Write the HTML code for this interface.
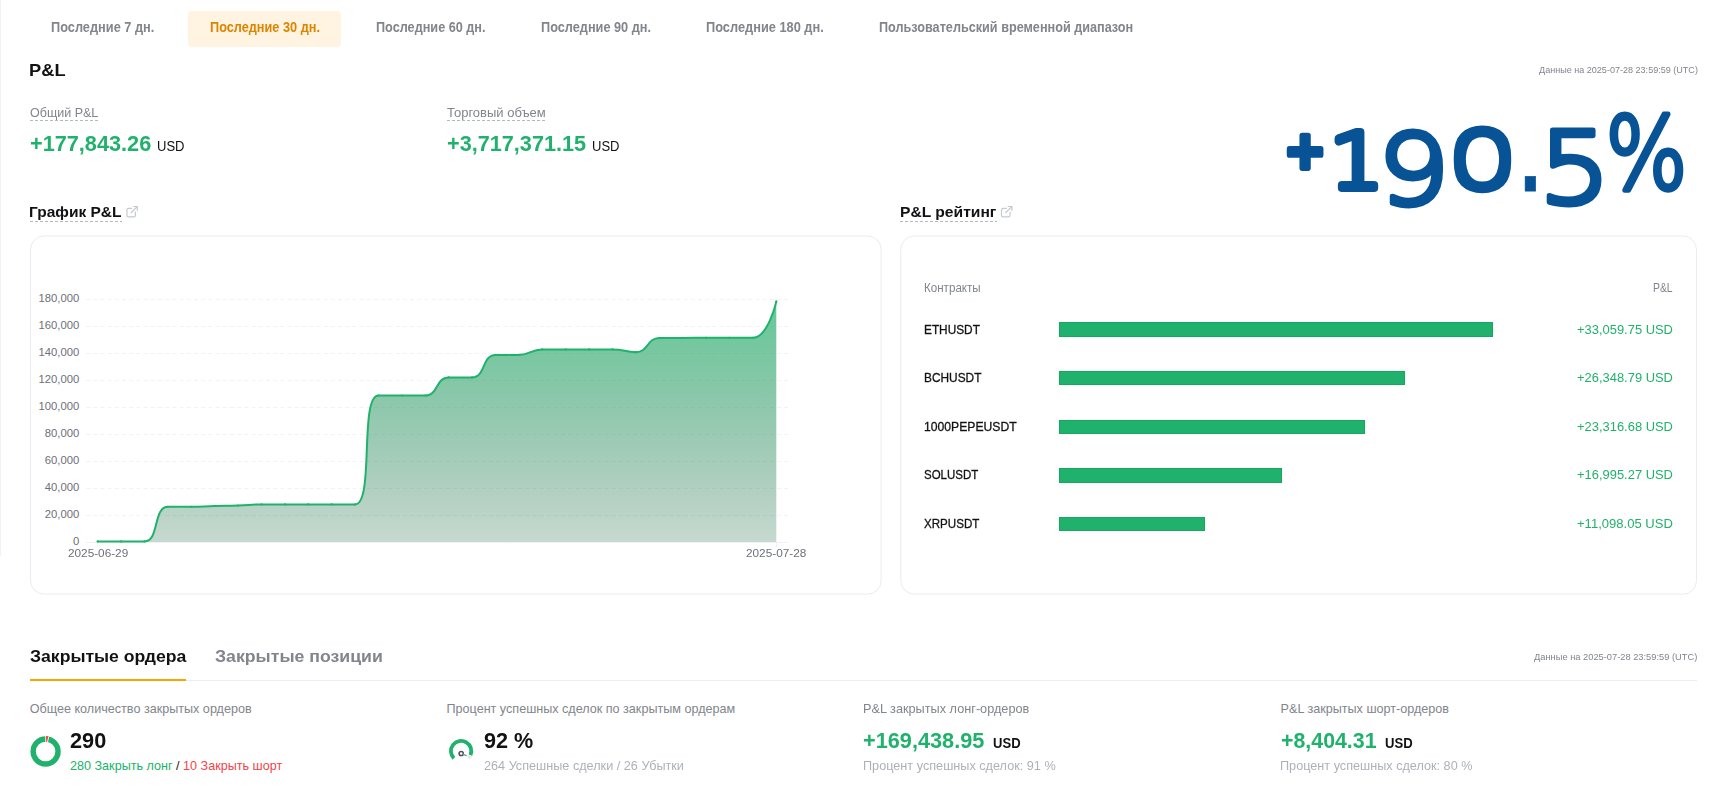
<!DOCTYPE html>
<html lang="ru"><head><meta charset="utf-8"><title>P&amp;L</title>
<style>
html,body{margin:0;padding:0;background:#fff;}
body{width:1724px;height:812px;position:relative;overflow:hidden;font-family:"Liberation Sans",Arial,sans-serif;}
.t{position:absolute;white-space:nowrap;line-height:1;transform-origin:0 0;}
.abs{position:absolute;}
.dash{position:absolute;height:1px;background:repeating-linear-gradient(90deg,#b4b8bf 0,#b4b8bf 3px,transparent 3px,transparent 5px);}
.bar{position:absolute;left:1059px;box-sizing:border-box;border:1px solid #12a960;background:#20b26c;}
svg{position:absolute;left:0;top:0;overflow:visible;}
</style></head><body>
<div class="abs" style="left:0;top:0;width:1px;height:556px;background:#f0f2f5"></div>
<div class="abs" style="left:188px;top:11px;width:153px;height:36px;border-radius:4px;background:#fff3e2"></div>
<div class="dash" style="left:30px;top:120px;width:68px"></div>
<div class="dash" style="left:447px;top:120px;width:99px"></div>
<div class="dash" style="left:30px;top:221px;width:92px"></div>
<div class="dash" style="left:900px;top:221px;width:97px"></div>
<div class="abs" style="left:30px;top:680px;width:1667px;height:1px;background:#ededed"></div>
<div class="abs" style="left:30px;top:679px;width:156px;height:2px;background:#f7a600"></div>
<div class="bar" style="top:322px;width:434px;height:15px"></div><div class="bar" style="top:371px;width:346px;height:14px"></div><div class="bar" style="top:420px;width:306px;height:14px"></div><div class="bar" style="top:468px;width:223px;height:15px"></div><div class="bar" style="top:517px;width:146px;height:14px"></div>
<svg width="1724" height="812" viewBox="0 0 1724 812">
<defs><linearGradient id="ag" x1="0" y1="0" x2="0" y2="1"><stop offset="0" stop-color="#20b26c" stop-opacity="0.695"/><stop offset="1" stop-color="#1d6743" stop-opacity="0.25"/></linearGradient></defs>
<rect x="30.5" y="236" width="850.6" height="358.1" rx="13.5" fill="none" stroke="#e9ecf1"/>
<rect x="900.8" y="236" width="795.7" height="358.1" rx="13.5" fill="none" stroke="#e9ecf1"/>
<g stroke="#f1f2f5" stroke-width="1" stroke-dasharray="4 3.2" fill="none"><line x1="86" x2="788" y1="515.5" y2="515.5"/><line x1="86" x2="788" y1="488.5" y2="488.5"/><line x1="86" x2="788" y1="461.5" y2="461.5"/><line x1="86" x2="788" y1="434.5" y2="434.5"/><line x1="86" x2="788" y1="407.5" y2="407.5"/><line x1="86" x2="788" y1="380.5" y2="380.5"/><line x1="86" x2="788" y1="353.5" y2="353.5"/><line x1="86" x2="788" y1="326.5" y2="326.5"/><line x1="86" x2="788" y1="299.5" y2="299.5"/></g>
<line x1="86" x2="788" y1="542.5" y2="542.5" stroke="#eef0f3" stroke-width="1"/>
<line x1="97.5" x2="97.5" y1="542" y2="547" stroke="#eef0f3" stroke-width="1"/><line x1="776.5" x2="776.5" y1="542" y2="547" stroke="#eef0f3" stroke-width="1"/>
<g font-family="'Liberation Sans', Arial, sans-serif" font-size="11.3" fill="#6e7079" text-anchor="end"><text x="79.3" y="544.6">0</text><text x="79.3" y="517.6">20,000</text><text x="79.3" y="490.6">40,000</text><text x="79.3" y="463.6">60,000</text><text x="79.3" y="436.6">80,000</text><text x="79.3" y="409.6">100,000</text><text x="79.3" y="382.6">120,000</text><text x="79.3" y="355.6">140,000</text><text x="79.3" y="328.6">160,000</text><text x="79.3" y="301.6">180,000</text></g>
<path d="M97.70,541.40C97.70,541.40 109.40,541.40 121.10,541.40C132.80,541.40 136.10,541.40 144.50,541.40C159.50,541.40 152.90,506.80 167.90,506.80C176.30,506.80 179.60,506.80 191.30,506.80C203.00,506.80 203.00,506.23 214.70,505.90C226.40,505.58 226.41,505.87 238.10,505.50C249.81,505.12 249.79,504.40 261.50,504.40C273.19,504.40 273.20,504.40 284.90,504.40C296.60,504.40 296.60,504.40 308.30,504.40C320.00,504.40 320.00,504.40 331.70,504.40C343.40,504.40 351.04,504.40 355.10,504.40C374.44,504.40 359.16,395.50 378.50,395.50C382.56,395.50 390.20,395.50 401.90,395.50C413.60,395.50 414.97,395.50 425.30,395.50C438.37,395.50 435.63,377.40 448.70,377.40C459.03,377.40 462.30,377.40 472.10,377.40C485.70,377.40 481.90,354.90 495.50,354.90C505.30,354.90 507.36,354.90 518.90,354.90C530.76,354.90 530.44,349.40 542.30,349.40C553.84,349.40 554.00,349.40 565.70,349.40C577.40,349.40 577.40,349.40 589.10,349.40C600.80,349.40 600.84,349.40 612.50,349.40C624.24,349.40 625.07,352.20 635.90,352.20C648.47,352.20 646.68,338.12 659.30,338.00C670.08,337.90 671.00,337.95 682.70,337.90C694.40,337.85 694.40,337.80 706.10,337.80C717.80,337.80 717.80,337.80 729.50,337.80C741.20,337.80 744.67,337.80 752.90,337.80C768.07,337.80 776.30,301.60 776.30,301.60L776.30,541.9L97.70,541.9Z" fill="url(#ag)" stroke="none"/>
<path d="M97.70,541.40C97.70,541.40 109.40,541.40 121.10,541.40C132.80,541.40 136.10,541.40 144.50,541.40C159.50,541.40 152.90,506.80 167.90,506.80C176.30,506.80 179.60,506.80 191.30,506.80C203.00,506.80 203.00,506.23 214.70,505.90C226.40,505.58 226.41,505.87 238.10,505.50C249.81,505.12 249.79,504.40 261.50,504.40C273.19,504.40 273.20,504.40 284.90,504.40C296.60,504.40 296.60,504.40 308.30,504.40C320.00,504.40 320.00,504.40 331.70,504.40C343.40,504.40 351.04,504.40 355.10,504.40C374.44,504.40 359.16,395.50 378.50,395.50C382.56,395.50 390.20,395.50 401.90,395.50C413.60,395.50 414.97,395.50 425.30,395.50C438.37,395.50 435.63,377.40 448.70,377.40C459.03,377.40 462.30,377.40 472.10,377.40C485.70,377.40 481.90,354.90 495.50,354.90C505.30,354.90 507.36,354.90 518.90,354.90C530.76,354.90 530.44,349.40 542.30,349.40C553.84,349.40 554.00,349.40 565.70,349.40C577.40,349.40 577.40,349.40 589.10,349.40C600.80,349.40 600.84,349.40 612.50,349.40C624.24,349.40 625.07,352.20 635.90,352.20C648.47,352.20 646.68,338.12 659.30,338.00C670.08,337.90 671.00,337.95 682.70,337.90C694.40,337.85 694.40,337.80 706.10,337.80C717.80,337.80 717.80,337.80 729.50,337.80C741.20,337.80 744.67,337.80 752.90,337.80C768.07,337.80 776.30,301.60 776.30,301.60" fill="none" stroke="#20b26c" stroke-width="2" stroke-linejoin="round" stroke-linecap="round"/>
<g fill="#20b26c"><circle cx="97.70" cy="541.40" r="1.1"/><circle cx="121.10" cy="541.40" r="1.1"/><circle cx="144.50" cy="541.40" r="1.1"/><circle cx="167.90" cy="506.80" r="1.1"/><circle cx="191.30" cy="506.80" r="1.1"/><circle cx="214.70" cy="505.90" r="1.1"/><circle cx="238.10" cy="505.50" r="1.1"/><circle cx="261.50" cy="504.40" r="1.1"/><circle cx="284.90" cy="504.40" r="1.1"/><circle cx="308.30" cy="504.40" r="1.1"/><circle cx="331.70" cy="504.40" r="1.1"/><circle cx="355.10" cy="504.40" r="1.1"/><circle cx="378.50" cy="395.50" r="1.1"/><circle cx="401.90" cy="395.50" r="1.1"/><circle cx="425.30" cy="395.50" r="1.1"/><circle cx="448.70" cy="377.40" r="1.1"/><circle cx="472.10" cy="377.40" r="1.1"/><circle cx="495.50" cy="354.90" r="1.1"/><circle cx="518.90" cy="354.90" r="1.1"/><circle cx="542.30" cy="349.40" r="1.1"/><circle cx="565.70" cy="349.40" r="1.1"/><circle cx="589.10" cy="349.40" r="1.1"/><circle cx="612.50" cy="349.40" r="1.1"/><circle cx="635.90" cy="352.20" r="1.1"/><circle cx="659.30" cy="338.00" r="1.1"/><circle cx="682.70" cy="337.90" r="1.1"/><circle cx="706.10" cy="337.80" r="1.1"/><circle cx="729.50" cy="337.80" r="1.1"/><circle cx="752.90" cy="337.80" r="1.1"/><circle cx="776.30" cy="301.60" r="1.1"/></g>
<!-- link icons -->
<g id="ico" transform="translate(-0.8 0)" fill="none" stroke="#c5c9d1" stroke-width="1.2" stroke-linecap="round" stroke-linejoin="round">
<path d="M132.5,208.3H129.3a1.6,1.6 0 0 0 -1.6,1.6V215.2a1.6,1.6 0 0 0 1.6,1.6H134.6a1.6,1.6 0 0 0 1.6,-1.6V212"/>
<path d="M132,212.5L138,206.6M134.3,206.5H138.1V210.3"/>
</g>
<use href="#ico" x="874.6"/>
<!-- donut -->
<circle cx="45.6" cy="751.5" r="12.45" fill="none" stroke="#20b26c" stroke-width="5.4"/>
<path d="M45.3,735.8 L49.3,736.2 L47.9,742.4 L45.3,742.1 Z" fill="#fff"/>
<path d="M46.0,735.9 L48.5,736.2 L47.1,741.9 L46.2,741.9 Z" fill="#ef454a"/>
<!-- gauge -->
<path d="M453.89,758.31 A10.2,10.2 0 1 1 470.46,755.15" fill="none" stroke="#20b26c" stroke-width="3.8"/>
<path d="M470.46,755.15 A10.2,10.2 0 0 1 468.31,758.31" fill="none" stroke="#e6e8ee" stroke-width="3.8"/>
<circle cx="461.2" cy="753.5" r="2.1" fill="#fff" stroke="#4e5259" stroke-width="1.5"/>
<path d="M463.3,754.4L466.3,755.6" stroke="#8a8e96" stroke-width="1.2" stroke-linecap="round"/>
<defs><filter id="bf2" color-interpolation-filters="sRGB" filterUnits="userSpaceOnUse" x="1379" y="121" width="70" height="93"><feMorphology operator="dilate" radius="0 1"/></filter><filter id="bf3" color-interpolation-filters="sRGB" filterUnits="userSpaceOnUse" x="1448" y="119" width="69" height="80"><feMorphology operator="dilate" radius="0 2"/></filter><filter id="bf5" color-interpolation-filters="sRGB" filterUnits="userSpaceOnUse" x="1541" y="121" width="67" height="92"><feMorphology operator="dilate" radius="0 1"/></filter></defs><g id="big" role="img" aria-label="+190.5%"><text transform="matrix(0.4982 0 0 0.5189 1284.18 168.22)" font-family="'DejaVu Sans', sans-serif" font-size="100" font-weight="700" fill="#085396" stroke="#085396" stroke-width="11.08" stroke-linejoin="round" stroke-linecap="round">+</text><text transform="matrix(0.8546 0 0 0.7740 1329.51 187.70)" font-family="'DejaVu Sans', sans-serif" font-size="100" font-weight="200" fill="#085396" stroke="#085396" stroke-width="10.08" stroke-linejoin="round" stroke-linecap="round">1</text><g filter="url(#bf2)"><text transform="matrix(1.1454 0 0 0.9710 1377.14 203.58)" font-family="'DejaVu Sans', sans-serif" font-size="100" font-weight="200" fill="#085396" stroke="#085396" stroke-width="5.05" stroke-linejoin="round" stroke-linecap="round">9</text></g><g filter="url(#bf3)"><text transform="matrix(1.1217 0 0 0.7812 1446.92 187.65)" font-family="'DejaVu Sans', sans-serif" font-size="100" font-weight="200" fill="#085396" stroke="#085396" stroke-width="5.80" stroke-linejoin="round" stroke-linecap="round">0</text></g><text transform="matrix(0.5990 0 0 0.7701 1518.97 191.01)" font-family="'DejaVu Sans', sans-serif" font-size="100" font-weight="700" fill="#085396" stroke="#085396" stroke-width="1.0" stroke-linejoin="round">.</text><g filter="url(#bf5)"><text transform="matrix(1.1491 0 0 0.9858 1538.26 202.84)" font-family="'DejaVu Sans', sans-serif" font-size="100" font-weight="200" fill="#085396" stroke="#085396" stroke-width="5.02" stroke-linejoin="round" stroke-linecap="round">5</text></g><text transform="matrix(0.8631 0 0 1.0033 1605.39 189.14)" font-family="'DejaVu Sans', sans-serif" font-size="100" font-weight="200" fill="#085396" stroke="#085396" stroke-width="5.30" stroke-linejoin="round" stroke-linecap="round">%</text></g>
</svg>
<span class="t" style="left:50.69px;top:20px;font-size:14px;font-weight:700;color:#81858c;transform:scaleX(0.9124);">Последние 7 дн.</span>
<span class="t" style="left:209.59px;top:20px;font-size:14px;font-weight:700;color:#dc8600;transform:scaleX(0.9082);">Последние 30 дн.</span>
<span class="t" style="left:375.50px;top:20px;font-size:14px;font-weight:700;color:#81858c;transform:scaleX(0.9049);">Последние 60 дн.</span>
<span class="t" style="left:540.59px;top:20px;font-size:14px;font-weight:700;color:#81858c;transform:scaleX(0.9091);">Последние 90 дн.</span>
<span class="t" style="left:706.49px;top:20px;font-size:14px;font-weight:700;color:#81858c;transform:scaleX(0.9142);">Последние 180 дн.</span>
<span class="t" style="left:879.40px;top:20px;font-size:14px;font-weight:700;color:#81858c;transform:scaleX(0.9035);">Пользовательский временной диапазон</span>
<span class="t" style="left:29.26px;top:62px;font-size:17px;font-weight:700;color:#121214;transform:scaleX(1.0746);">P&amp;L</span>
<span class="t" style="left:1538.79px;top:66px;font-size:9px;font-weight:400;color:#81858c;transform:scaleX(1.0055);">Данные на 2025-07-28 23:59:59 (UTC)</span>
<span class="t" style="left:29.75px;top:107px;font-size:12px;font-weight:400;color:#81858c;transform:scaleX(1.0423);">Общий P&amp;L</span>
<span class="t" style="left:29.61px;top:133px;font-size:22px;font-weight:700;color:#20b26c;transform:scaleX(0.9856);">+177,843.26</span>
<span class="t" style="left:157.02px;top:139px;font-size:14px;font-weight:400;color:#121214;transform:scaleX(0.9304);">USD</span>
<span class="t" style="left:446.99px;top:107px;font-size:12px;font-weight:400;color:#81858c;transform:scaleX(1.0839);">Торговый объем</span>
<span class="t" style="left:446.62px;top:133px;font-size:22px;font-weight:700;color:#20b26c;transform:scaleX(0.9843);">+3,717,371.15</span>
<span class="t" style="left:592.02px;top:139px;font-size:14px;font-weight:400;color:#121214;transform:scaleX(0.9304);">USD</span>
<span class="t" style="left:29.27px;top:204px;font-size:15px;font-weight:700;color:#121214;transform:scaleX(1.0341);">График P&amp;L</span>
<span class="t" style="left:899.66px;top:204px;font-size:15px;font-weight:700;color:#121214;transform:scaleX(1.0417);">P&amp;L рейтинг</span>
<span class="t" style="left:923.53px;top:282px;font-size:12px;font-weight:400;color:#81858c;transform:scaleX(0.9668);">Контракты</span>
<span class="t" style="left:1653.33px;top:282px;font-size:12px;font-weight:400;color:#81858c;transform:scaleX(0.8667);">P&amp;L</span>
<span class="t" style="left:923.69px;top:323px;font-size:13px;font-weight:400;color:#121214;transform:scaleX(0.9101);-webkit-text-stroke:0.3px #121214;">ETHUSDT</span>
<span class="t" style="left:1577.41px;top:323px;font-size:13px;font-weight:400;color:#20b26c;transform:scaleX(0.9945);">+33,059.75 USD</span>
<span class="t" style="left:923.69px;top:371px;font-size:13px;font-weight:400;color:#121214;transform:scaleX(0.9134);-webkit-text-stroke:0.3px #121214;">BCHUSDT</span>
<span class="t" style="left:1577.41px;top:371px;font-size:13px;font-weight:400;color:#20b26c;transform:scaleX(0.9945);">+26,348.79 USD</span>
<span class="t" style="left:923.93px;top:420px;font-size:13px;font-weight:400;color:#121214;transform:scaleX(0.9364);-webkit-text-stroke:0.3px #121214;">1000PEPEUSDT</span>
<span class="t" style="left:1577.41px;top:420px;font-size:13px;font-weight:400;color:#20b26c;transform:scaleX(0.9945);">+23,316.68 USD</span>
<span class="t" style="left:923.98px;top:468px;font-size:13px;font-weight:400;color:#121214;transform:scaleX(0.8826);-webkit-text-stroke:0.3px #121214;">SOLUSDT</span>
<span class="t" style="left:1577.41px;top:468px;font-size:13px;font-weight:400;color:#20b26c;transform:scaleX(0.9945);">+16,995.27 USD</span>
<span class="t" style="left:924.24px;top:517px;font-size:13px;font-weight:400;color:#121214;transform:scaleX(0.8920);-webkit-text-stroke:0.3px #121214;">XRPUSDT</span>
<span class="t" style="left:1577.41px;top:517px;font-size:13px;font-weight:400;color:#20b26c;transform:scaleX(1.0041);">+11,098.05 USD</span>
<span class="t" style="left:29.52px;top:648px;font-size:17px;font-weight:700;color:#121214;transform:scaleX(1.0357);">Закрытые ордера</span>
<span class="t" style="left:215.11px;top:648px;font-size:17px;font-weight:700;color:#81858c;transform:scaleX(1.0412);">Закрытые позиции</span>
<span class="t" style="left:1534.19px;top:653px;font-size:9px;font-weight:400;color:#81858c;transform:scaleX(1.0328);">Данные на 2025-07-28 23:59:59 (UTC)</span>
<span class="t" style="left:29.74px;top:703px;font-size:12.6px;font-weight:400;color:#81858c;">Общее количество закрытых ордеров</span>
<span class="t" style="left:70.09px;top:730px;font-size:22px;font-weight:700;color:#121214;transform:scaleX(0.9863);">290</span>
<span class="t" style="left:70.00px;top:760px;font-size:12.6px;font-weight:400;color:#121214;"><span style="color:#20b26c">280 Закрыть лонг</span> / <span style="color:#ef454a">10 Закрыть шорт</span></span>
<span class="t" style="left:446.50px;top:703px;font-size:12.6px;font-weight:400;color:#81858c;">Процент успешных сделок по закрытым ордерам</span>
<span class="t" style="left:484.39px;top:730px;font-size:22px;font-weight:700;color:#121214;transform:scaleX(0.9812);">92 %</span>
<span class="t" style="left:484.30px;top:760px;font-size:12.6px;font-weight:400;color:#adb1b8;transform:scaleX(1.0055);">264 Успешные сделки / 26 Убытки</span>
<span class="t" style="left:862.99px;top:703px;font-size:12.6px;font-weight:400;color:#81858c;transform:scaleX(1.0093);">P&amp;L закрытых лонг-ордеров</span>
<span class="t" style="left:863.41px;top:730px;font-size:22px;font-weight:700;color:#20b26c;transform:scaleX(0.9866);">+169,438.95</span>
<span class="t" style="left:992.57px;top:736px;font-size:14px;font-weight:700;color:#121214;transform:scaleX(0.9321);">USD</span>
<span class="t" style="left:862.99px;top:760px;font-size:12.6px;font-weight:400;color:#adb1b8;transform:scaleX(1.0062);">Процент успешных сделок: 91 %</span>
<span class="t" style="left:1280.60px;top:703px;font-size:12.6px;font-weight:400;color:#81858c;">P&amp;L закрытых шорт-ордеров</span>
<span class="t" style="left:1280.93px;top:730px;font-size:22px;font-weight:700;color:#20b26c;transform:scaleX(0.9701);">+8,404.31</span>
<span class="t" style="left:1385.46px;top:736px;font-size:14px;font-weight:700;color:#121214;transform:scaleX(0.9357);">USD</span>
<span class="t" style="left:1280.49px;top:760px;font-size:12.6px;font-weight:400;color:#adb1b8;transform:scaleX(1.0052);">Процент успешных сделок: 80 %</span>
<span class="t" style="left:67.74px;top:548px;font-size:11px;font-weight:400;color:#6e7079;transform:scaleX(1.0702);">2025-06-29</span>
<span class="t" style="left:746.44px;top:548px;font-size:11px;font-weight:400;color:#6e7079;transform:scaleX(1.0713);">2025-07-28</span>
</body></html>
